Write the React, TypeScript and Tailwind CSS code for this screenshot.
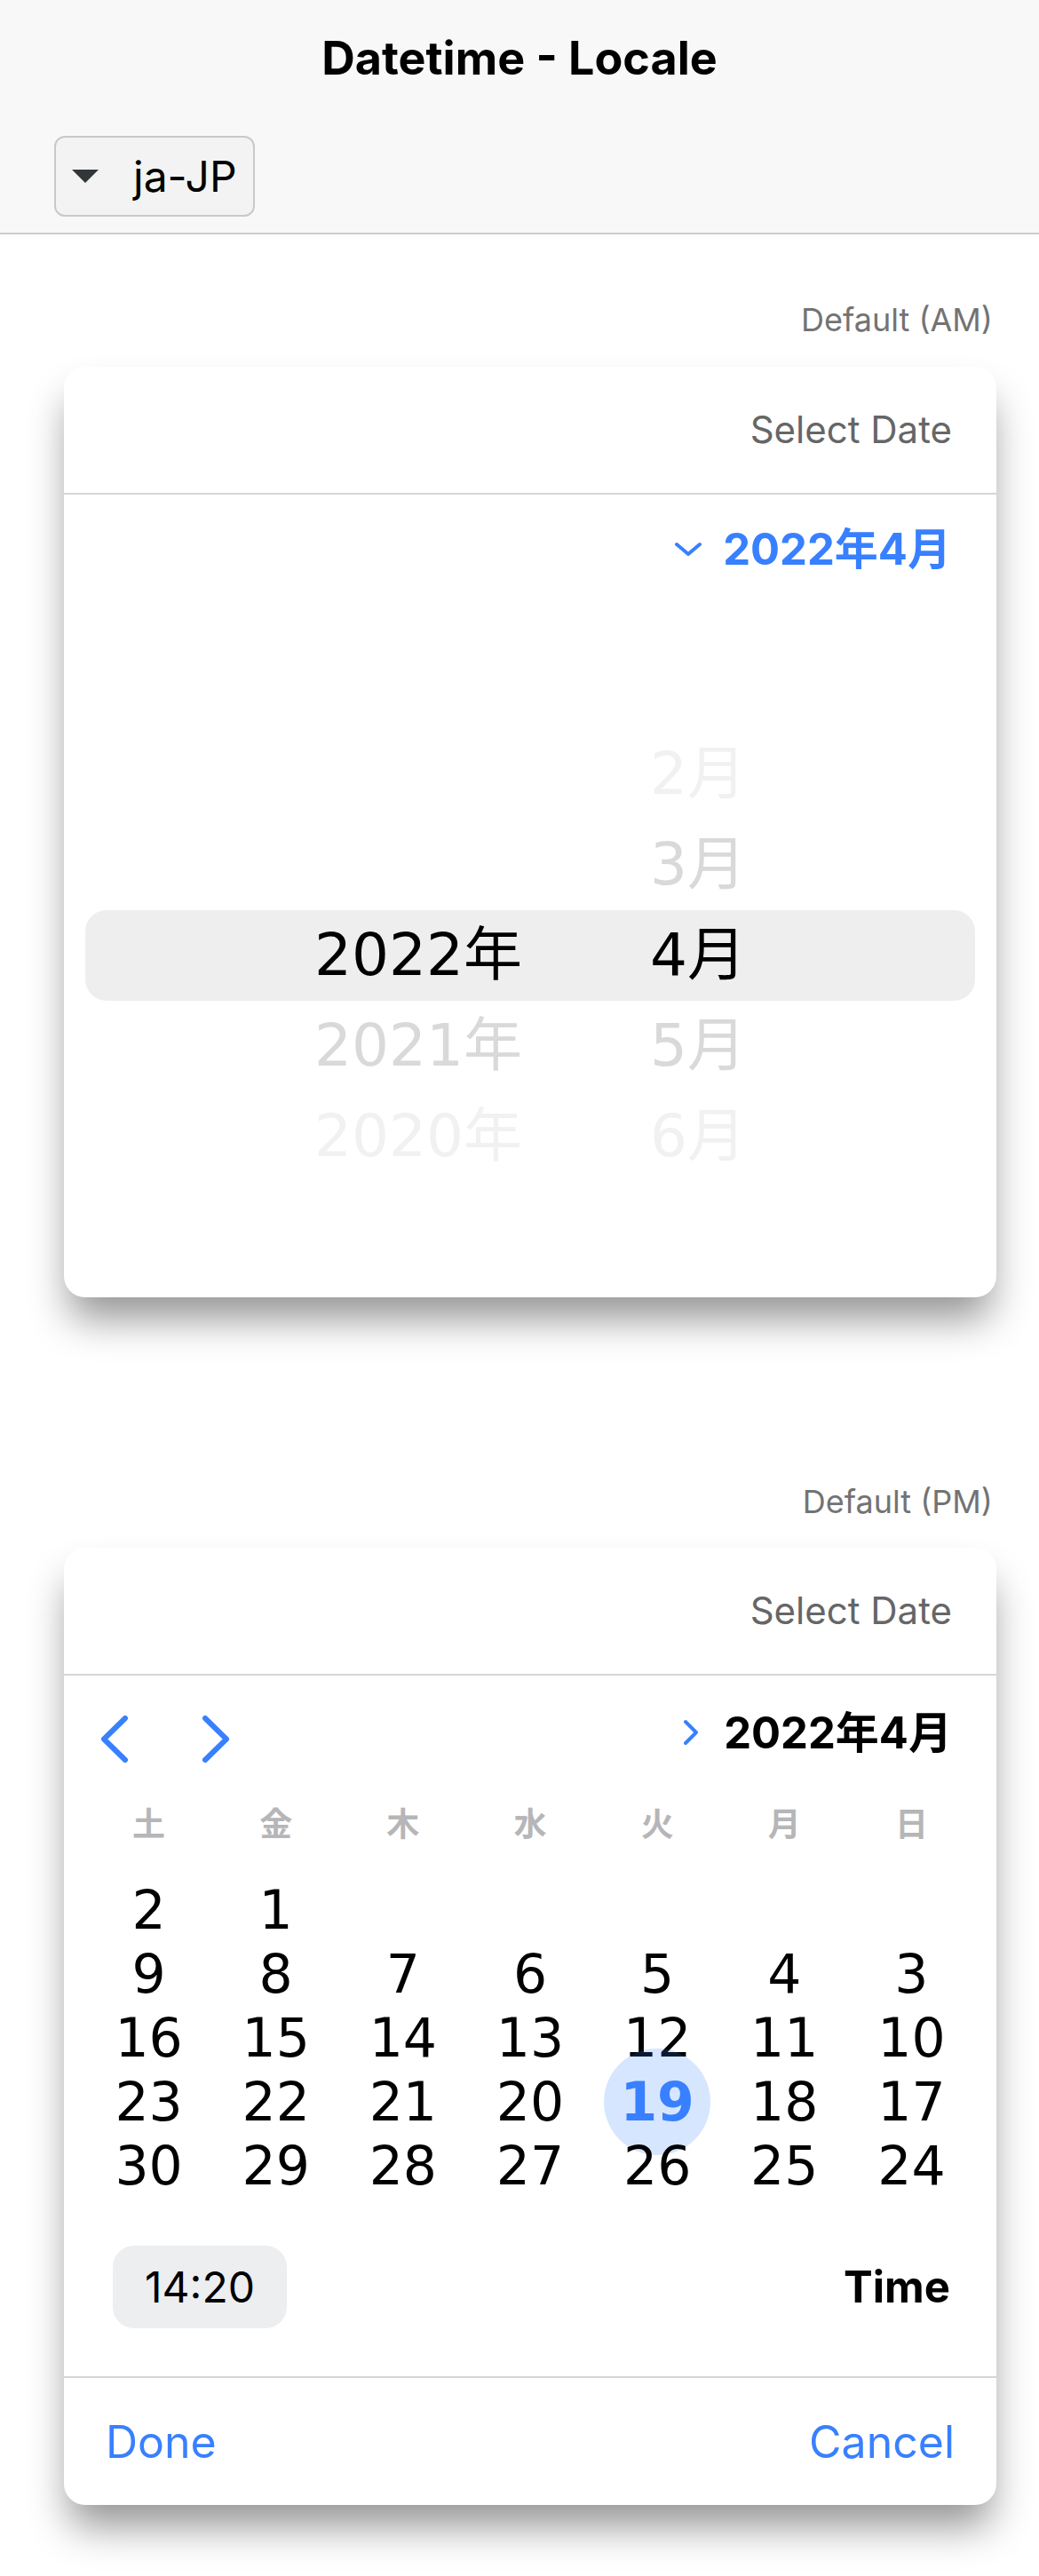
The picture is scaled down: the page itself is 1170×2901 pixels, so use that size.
const ui = "font-['Inter','Noto_Sans_CJK_JP',sans-serif]"
const num = "font-['DejaVu_Sans','Noto_Sans_CJK_JP',sans-serif]"

const wheel = [
  { year: "", month: "2月", tone: "text-[#f1f1f1]", active: false },
  { year: "", month: "3月", tone: "text-[#d9d9d9]", active: false },
  { year: "2022年", month: "4月", tone: "text-black", active: true },
  { year: "2021年", month: "5月", tone: "text-[#d9d9d9]", active: false },
  { year: "2020年", month: "6月", tone: "text-[#f1f1f1]", active: false },
]

const weekdays = ["土", "金", "木", "水", "火", "月", "日"]

const weeks = [
  ["2", "1", "", "", "", "", ""],
  ["9", "8", "7", "6", "5", "4", "3"],
  ["16", "15", "14", "13", "12", "11", "10"],
  ["23", "22", "21", "20", "19", "18", "17"],
  ["30", "29", "28", "27", "26", "25", "24"],
]

function ChevronDown() {
  return (
    <svg width="32" height="16" viewBox="0 0 32 16" fill="none">
      <polyline points="3,3 16,14 29,3" stroke="#3880ff" strokeWidth="4" strokeLinecap="round" strokeLinejoin="round" />
    </svg>
  )
}

function ChevronRight() {
  return (
    <svg width="21" height="30" viewBox="0 0 21 30" fill="none">
      <polyline points="5,3 17,15 5,27" stroke="#3880ff" strokeWidth="4" strokeLinecap="round" strokeLinejoin="round" />
    </svg>
  )
}

function NavArrow({ dir }: { dir: "left" | "right" }) {
  return (
    <svg width="34" height="55" viewBox="0 0 34 55" fill="none">
      <polyline
        points={dir === "left" ? "29,4 5,27.5 29,51" : "5,4 29,27.5 5,51"}
        stroke="#3880ff"
        strokeWidth="6"
        strokeLinecap="round"
        strokeLinejoin="round"
      />
    </svg>
  )
}

function CardHeader() {
  return (
    <div className="h-[144px] flex items-center justify-end pr-[50px] border-b-2 border-[#d6d6d8] text-[42px] leading-none text-[#666666]">
      Select Date
    </div>
  )
}

const cardCls =
  "ml-[72px] w-[1050px] bg-white rounded-[24px] shadow-[0_30px_45px_-6px_rgba(0,0,0,0.42)]"

export default function App() {
  return (
    <div className={`${ui} min-h-screen bg-white text-black`}>
      {/* toolbar */}
      <div className="h-[264px] bg-[#f8f8f8] border-b-2 border-[#cdcdcd]">
        <div className="h-[132px] flex items-center justify-center text-[52px] font-bold leading-none">
          Datetime - Locale
        </div>
        <div className="mt-[21px] ml-[61px] w-[226px] h-[91px] border-2 border-[#c9c9c9] rounded-[12px] bg-[#f3f3f3] flex items-center pl-[18px]">
          <svg width="30" height="15" viewBox="0 0 30 15">
            <polygon points="0,0 30,0 15,15" fill="#333638" />
          </svg>
          <span className="ml-[39px] text-[48px] leading-none">ja-JP</span>
        </div>
      </div>

      {/* AM */}
      <div className="mt-[74px] h-[44px] flex items-center justify-end pr-[52px] text-[36px] leading-none text-[#737373]">
        Default (AM)
      </div>
      <div className={`mt-[31px] ${cardCls}`}>
        <CardHeader />
        <div className="mt-[31px] h-[60px] flex items-center justify-end pr-[51px]">
          <ChevronDown />
          <span className="ml-[23px] text-[49px] font-bold leading-none text-[#3880ff]">2022年4月</span>
        </div>
        <div className={`${num} mt-[173px] pb-[130px] text-[66px] leading-none`}>
          {wheel.map((r, i) => (
            <div
              key={i}
              className={`mx-[24px] h-[102px] flex items-center rounded-[24px] ${r.tone} ${r.active ? "bg-[#eeeeef]" : ""}`}
            >
              <div className="w-[492px] text-right">{r.year}</div>
              <div className="pl-[144px]">{r.month}</div>
            </div>
          ))}
        </div>
      </div>

      {/* PM */}
      <div className="mt-[208px] h-[44px] flex items-center justify-end pr-[52px] text-[36px] leading-none text-[#737373]">
        Default (PM)
      </div>
      <div className={`mt-[30px] ${cardCls}`}>
        <CardHeader />
        <div className="mt-[34px] h-[60px] flex items-center justify-between pl-[40px] pr-[50px]">
          <div className="flex items-center gap-[80px] pt-[14px]">
            <NavArrow dir="left" />
            <NavArrow dir="right" />
          </div>
          <div className="flex items-center">
            <ChevronRight />
            <span className="ml-[27px] text-[49px] font-bold leading-none">2022年4月</span>
          </div>
        </div>

        <div className="mx-[24px] mt-[53px] h-[40px] grid grid-cols-7 items-center text-center text-[37px] font-semibold leading-none text-[#b6b6b8]">
          {weekdays.map((d) => (
            <div key={d}>{d}</div>
          ))}
        </div>

        <div className={`${num} mx-[24px] mt-[41px] text-[60px] leading-none`}>
          {weeks.map((w, i) => (
            <div key={i} className="grid grid-cols-7 h-[72px]">
              {w.map((d, j) => {
                const sel = d === "19"
                return (
                  <div key={j} className="relative flex items-center justify-center">
                    {sel && (
                      <div className="absolute left-1/2 top-1/2 -translate-x-1/2 -translate-y-1/2 w-[120px] h-[120px] rounded-full bg-[rgba(56,128,255,0.2)]" />
                    )}
                    <span className={sel ? "relative font-bold text-[#3880ff]" : ""}>{d}</span>
                  </div>
                )
              })}
            </div>
          ))}
        </div>

        <div className="mt-[54px] pb-[54px] flex items-center justify-between pl-[55px] pr-[52px]">
          <div className="w-[196px] h-[93px] rounded-[24px] bg-[#edeef0] flex items-center justify-center text-[48px] leading-none">
            14:20
          </div>
          <span className="text-[49px] font-bold leading-none">Time</span>
        </div>

        <div className="h-[145px] border-t-2 border-[#d6d6d8] flex items-center justify-between px-[47px] text-[50px] leading-none text-[#3880ff]">
          <span>Done</span>
          <span>Cancel</span>
        </div>
      </div>
      <div className="h-[74px]" />
    </div>
  )
}
